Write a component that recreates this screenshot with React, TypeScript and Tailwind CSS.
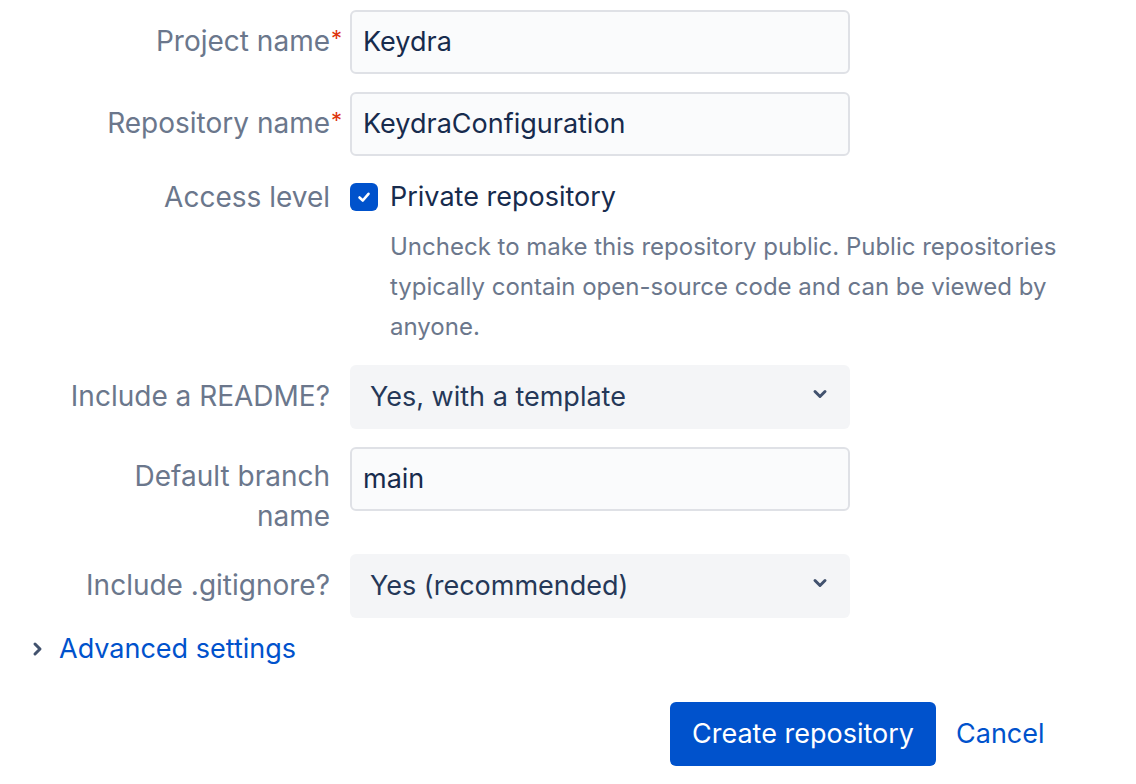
import React from 'react';

const font = { fontFamily: 'Inter, "Liberation Sans", sans-serif' };

const Label = ({ text, required }: { text: string; required?: boolean }) => (
  <div className="text-right text-[28px] leading-[40px] text-[#6b778c] pt-[11px]">
    <span className="relative">
      {text}
      {required && <span className="absolute -right-[12px] -top-[6px] text-[22px] text-[#de350b]">*</span>}
    </span>
  </div>
);

const TextInput = ({ value }: { value: string }) => (
  <div className="h-16 w-[500px] rounded-md border-2 border-[#dfe1e6] bg-[#fafbfc] pl-[11px] flex items-center text-[27px] text-[#172b4d]">
    {value}
  </div>
);

const Select = ({ value }: { value: string }) => (
  <div className="h-16 w-[500px] rounded-md bg-[#f4f5f7] pl-5 pr-[22px] flex items-center justify-between text-[27px] text-[#253858]">
    <span>{value}</span>
    <svg width="16" height="12" viewBox="0 0 16 12" className="-mt-[6px]">
      <path d="M3 3.5 L8 8.5 L13 3.5" fill="none" stroke="#42526e" strokeWidth="3" strokeLinecap="round" strokeLinejoin="round" />
    </svg>
  </div>
);

export default function App() {
  return (
    <div className="min-h-screen bg-white pt-[10px]" style={font}>
      <div className="grid grid-cols-[330px_500px] gap-x-5 gap-y-[18px]">
        <Label text="Project name" required />
        <TextInput value="Keydra" />

        <Label text="Repository name" required />
        <TextInput value="KeydraConfiguration" />

        <div className="text-right text-[28px] leading-[40px] text-[#6b778c] pt-[3px]">Access level</div>
        <div className="w-[720px]">
          <div className="h-11 flex items-center gap-3 pt-[2px]">
            <div className="w-7 h-7 rounded-md bg-[#0052cc] flex items-center justify-center">
              <svg width="18" height="18" viewBox="0 0 18 18">
                <path d="M4.5 9.5 L7.8 12.5 L13.5 5.8" fill="none" stroke="white" strokeWidth="2.6" strokeLinecap="round" strokeLinejoin="round" />
              </svg>
            </div>
            <span className="text-[27px] text-[#172b4d]">Private repository</span>
          </div>
          <p className="mt-[9px] pl-10 text-[24px] leading-[40px] text-[#6b778c]">
            Uncheck to make this repository public. Public repositories typically contain open-source code and can be viewed by anyone.
          </p>
        </div>

        <Label text="Include a README?" />
        <Select value="Yes, with a template" />

        <div className="text-right text-[28px] leading-[40px] text-[#6b778c] pt-[9px] pl-[120px]">Default branch name</div>
        <div>
          <TextInput value="main" />
        </div>

        <Label text="Include .gitignore?" />
        <Select value="Yes (recommended)" />
      </div>

      <div className="mt-[11px] flex items-center h-10 pl-[31px] gap-[14px]">
        <svg width="14" height="16" viewBox="0 0 14 16">
          <path d="M4 3 L9 8 L4 13" fill="none" stroke="#42526e" strokeWidth="3" strokeLinecap="round" strokeLinejoin="round" />
        </svg>
        <span className="text-[27px] text-[#0052cc]">Advanced settings</span>
      </div>

      <div className="mt-[33px] flex items-center pl-[670px] gap-5">
        <button className="h-16 px-[22px] rounded-md bg-[#0052cc] text-white text-[27px]">Create repository</button>
        <button className="text-[27px] text-[#0052cc]">Cancel</button>
      </div>
    </div>
  );
}
